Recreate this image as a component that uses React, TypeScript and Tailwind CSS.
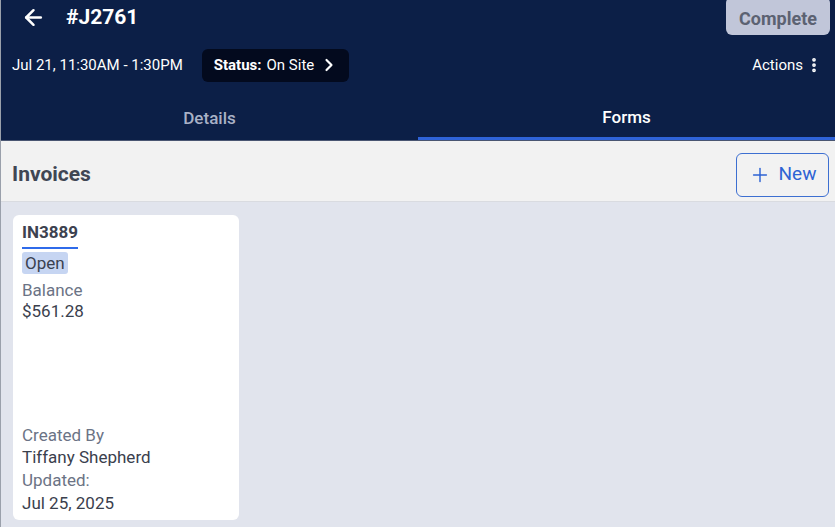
import { ArrowLeft, ChevronRight, EllipsisVertical, Plus } from "lucide-react";

export default function App() {
  return (
    <div
      className="flex h-[527px] w-[835px] flex-col overflow-hidden border-l border-[#9aa0ab] bg-[#e1e4ed]"
      style={{ fontFamily: "Roboto, 'Noto Sans', sans-serif" }}
    >
      {/* header */}
      <header className="bg-[#0c1f47] text-white">
        <div className="flex h-[37px] items-start justify-between pl-[20px] pr-[5px]">
          <div className="flex items-center gap-[20px] pt-[4px]">
            <ArrowLeft size={25} strokeWidth={2.4} />
            <h1 className="text-[21px] font-bold leading-[26px]">#J2761</h1>
          </div>
          <button className="-mt-[3px] h-[38px] w-[104px] rounded-md bg-[#c1c6d9] pt-[4px] text-[18px] font-bold text-[#5c6272]">
            Complete
          </button>
        </div>

        <div className="flex h-[56px] items-center justify-between pl-[11px] pr-[12px]">
          <div className="flex items-center gap-[19px]">
            <span className="text-[15px]">Jul 21, 11:30AM - 1:30PM</span>
            <button className="flex h-[33px] items-center gap-[5px] rounded-md bg-[#030a1e] pl-[12px] pr-[10px] text-[15px]">
              <span className="font-bold">Status:</span>
              <span>On Site</span>
              <ChevronRight size={20} strokeWidth={2.6} />
            </button>
          </div>
          <div className="flex items-center gap-[2px] text-[15px]">
            <span>Actions</span>
            <EllipsisVertical size={18} strokeWidth={3} />
          </div>
        </div>

        <nav className="flex h-[48px] border-b border-[#4a5672]">
          <div className="flex flex-1 items-center justify-center pt-[4px] text-[17px] font-medium text-[#a9b1c6]">
            Details
          </div>
          <div className="flex flex-1 items-center justify-center border-b-[3px] border-[#2f63d8] pt-[5px] text-[17px] font-medium">
            Forms
          </div>
        </nav>
      </header>

      {/* invoices bar */}
      <div className="flex h-[61px] items-center justify-between border-b border-[#d9dbe0] bg-[#f2f2f2] pl-[11px] pr-[6px] pt-[7px]">
        <h2 className="text-[21px] font-bold text-[#404654]">Invoices</h2>
        <button className="flex h-[44px] w-[93px] items-center justify-center gap-[8px] rounded-md border border-[#3d6fd1] text-[19px] text-[#2e63d4]">
          <Plus size={22} strokeWidth={1.6} />
          <span>New</span>
        </button>
      </div>

      {/* cards */}
      <div className="flex flex-1 px-[12px] pt-[13px]">
        <div className="flex h-[305px] w-[226px] flex-col justify-between rounded-md bg-white pl-[9px] pt-[5px] pb-[5px] text-[17px]">
          <div>
            <div className="inline-block border-b-[2px] border-[#2f6bea] pb-[1px] font-bold text-[#3c4250]">
              IN3889
            </div>
            <div className="mt-[2px]">
              <span className="inline-block rounded-[3px] bg-[#c6d5f2] px-[3px] py-[1px] leading-[20px] text-[#3a4150]">
                Open
              </span>
            </div>
            <div className="mt-[4px] leading-[21px] text-[#6b7385]">Balance</div>
            <div className="leading-[21px] text-[#3a404d]">$561.28</div>
          </div>
          <div>
            <div className="leading-[22px] text-[#6b7385]">Created By</div>
            <div className="leading-[22px] text-[#3a404d]">Tiffany Shepherd</div>
            <div className="mt-[1px] leading-[23px] text-[#6b7385]">Updated:</div>
            <div className="leading-[23px] text-[#3a404d]">Jul 25, 2025</div>
          </div>
        </div>
      </div>
    </div>
  );
}
